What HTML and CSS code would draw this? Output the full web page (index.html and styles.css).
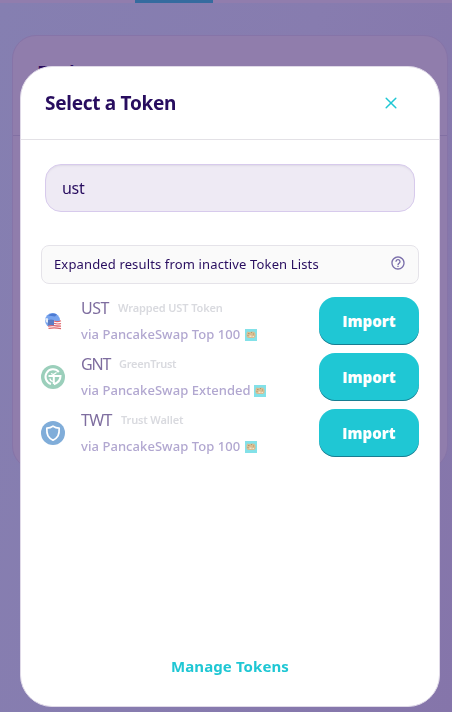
FILE: index.html
```html
<!DOCTYPE html>
<html lang="en">
<head>
<meta charset="utf-8">
<title>Select a Token</title>
<link rel="stylesheet" href="styles.css">
</head>
<body>
<div class="page">
  <div class="nav"><div class="nav-active"></div></div>
  <div class="card"><div class="card-head">Exchange</div></div>
</div>
<div class="modal">
  <header class="modal-head">
    <h1 class="title">Select a Token</h1>
    <svg class="close" viewBox="0 0 12 12"><path d="M1.2 1.2 10.8 10.8M10.8 1.2 1.2 10.8"/></svg>
  </header>
  <div class="search">ust</div>
  <div class="notice">
    <span class="notice-text">Expanded results from inactive Token Lists</span>
    <svg class="help" viewBox="0 0 24 24"><path d="M11 18h2v-2h-2v2zm1-16C6.48 2 2 6.48 2 12s4.48 10 10 10 10-4.48 10-10S17.52 2 12 2zm0 18c-4.41 0-8-3.590-8-8s3.590-8 8-8 8 3.590 8 8-3.590 8-8 8zm0-14c-2.210 0-4 1.790-4 4h2c0-1.100.9-2 2-2s2 .9 2 2c0 2-3 1.750-3 5h2c0-2.250 3-2.500 3-5 0-2.210-1.790-4-4-4z"/></svg>
  </div>
  <div class="list">
    <div class="row">
      <svg class="logo" viewBox="0 0 24 24">
        <circle cx="11.500" cy="11.500" r="7.500" fill="#78a4ee"/>
        <path fill="#4c7ad2" d="M7 6.500Q11 3 16 5.500L14 7.500z"/>
        <path fill="#e4edfb" d="m4 9.500 2.500-.5 1 2.500L6.500 14 5 13z"/>
        <path fill="#fff" d="M12.500 11.500q4 1 7.500 0V20H8l-1.500-3 6-.5z"/>
        <path fill="none" stroke="#e0646a" stroke-width="1.200" d="M13 12q3.500 1.400 7-.3M13 14.200q3.500 1.400 7 .3M7 17.200q3-1 6-.5t7 .5M7.500 19.400q6-1 12.500.2"/>
        <path fill="#5a7cc4" d="M7 11q3-1 6 0v5.500q-3-1-6 0z"/>
      </svg>
      <div class="info">
        <div class="line"><span class="symbol s-ust">UST</span><span class="name n-ust">Wrapped UST Token</span></div>
        <div class="line source"><span class="via v-top">via PancakeSwap Top 100</span><svg class="bunny" viewBox="0 0 12 12"><path fill="#83e1e8" d="M0 0h12v12H0z"/><path fill="#d8bd91" d="m1.500 4.500 1-2 2 .5 3-.5 2 .5 1 2v2.500L9 9H3L1.500 7.500z"/><path fill="#b0976f" d="M3 4h1.500v1H3zM6 3h1v1H6zM8 4.500h1v1H8zM2.500 6h1v1h-1z"/><path fill="#f4e4cc" d="M4.500 6.500h2V8h-2zM7.500 7H9v1H7.500z"/></svg></div>
      </div>
      <button class="import"><span>Import</span></button>
    </div>
    <div class="row">
      <svg class="logo" viewBox="0 0 24 24">
        <circle cx="12" cy="12" r="12" fill="#9bcfbb"/>
        <path fill="none" stroke="#fff" stroke-width="2" d="M17.800 7A7.500 7.500 0 1 0 10 19M7.500 11h12q0 6-6.700 8.200M12.800 10v9"/>
        <path fill="none" stroke="#fff" stroke-width="1.300" d="M8.800 13.500q.5 2.500 3 3M10 8.500l2.500 1 3-2"/>
      </svg>
      <div class="info">
        <div class="line"><span class="symbol s-gnt">GNT</span><span class="name n-gnt">GreenTrust</span></div>
        <div class="line source"><span class="via v-ext">via PancakeSwap Extended</span><svg class="bunny" viewBox="0 0 12 12"><path fill="#83e1e8" d="M0 0h12v12H0z"/><path fill="#d8bd91" d="m1.500 4.500 1-2 2 .5 3-.5 2 .5 1 2v2.500L9 9H3L1.500 7.500z"/><path fill="#b0976f" d="M3 4h1.500v1H3zM6 3h1v1H6zM8 4.500h1v1H8zM2.500 6h1v1h-1z"/><path fill="#f4e4cc" d="M4.500 6.500h2V8h-2zM7.500 7H9v1H7.500z"/></svg></div>
      </div>
      <button class="import"><span>Import</span></button>
    </div>
    <div class="row">
      <svg class="logo" viewBox="0 0 24 24">
        <circle cx="12" cy="12" r="12" fill="#80add9"/>
        <path fill="none" stroke="#fff" stroke-width="1.700" stroke-linejoin="round" d="M12 5.200q2.500 2 6.200 2 .2 5-1.200 7.700-1.200 2.300-5 4.300-3.800-2-5-4.300Q5.600 12.200 5.800 7.200 9.500 7.200 12 5.200z"/>
      </svg>
      <div class="info">
        <div class="line"><span class="symbol s-twt">TWT</span><span class="name n-twt">Trust Wallet</span></div>
        <div class="line source"><span class="via v-top">via PancakeSwap Top 100</span><svg class="bunny" viewBox="0 0 12 12"><path fill="#83e1e8" d="M0 0h12v12H0z"/><path fill="#d8bd91" d="m1.500 4.500 1-2 2 .5 3-.5 2 .5 1 2v2.500L9 9H3L1.500 7.500z"/><path fill="#b0976f" d="M3 4h1.500v1H3zM6 3h1v1H6zM8 4.500h1v1H8zM2.500 6h1v1h-1z"/><path fill="#f4e4cc" d="M4.500 6.500h2V8h-2zM7.500 7H9v1H7.500z"/></svg></div>
      </div>
      <button class="import"><span>Import</span></button>
    </div>
  </div>
  <footer class="manage"><span>Manage Tokens</span></footer>
</div>
</body>
</html>
```
FILE: styles.css
```css
* { box-sizing: border-box; }
body {
  margin: 0;
  height: 712px;
  overflow: hidden;
  font-family: "Noto Sans", "Open Sans", sans-serif;
  color: #280d5f;
}
.page { height: 712px; background: linear-gradient(105deg, #857fb1, #877caf 50%, #8575aa); }
.nav { height: 3px; background: #917dad; padding-left: 135px; }
.nav-active { width: 78px; height: 3px; background: #356b9f; }
.card {
  height: 435px;
  margin: 32px 4px 0 12px;
  border: 1px solid #8674a8;
  border-radius: 24px;
  background: #907dac;
}
.card-head {
  height: 100px;
  padding: 26px 24px;
  border-bottom: 1px solid #8270a3;
  font-size: 20px;
  font-weight: 600;
  line-height: 22px;
}
.modal {
  position: fixed;
  left: 20px;
  top: 66px;
  width: 420px;
  height: 641px;
  display: flex;
  flex-direction: column;
  background: #fff;
  border: 1px solid #e0dae8;
  border-radius: 32px;
  overflow: hidden;
}
.modal-head {
  height: 73px;
  flex: none;
  display: flex;
  align-items: center;
  justify-content: space-between;
  padding: 0 42px 0 24px;
  border-bottom: 1px solid #e3e1e6;
}
.title { margin: 0; font-size: 19px; font-weight: 700; line-height: 30px; letter-spacing: -0.28px; white-space: nowrap; }
.close { width: 12px; height: 12px; fill: none; stroke: #1fc7d4; stroke-width: 1.5; stroke-linecap: round; }
.search {
  height: 48px;
  flex: none;
  margin: 24px 24px 0;
  padding: 0 16px;
  border: 1px solid #d7caec;
  border-radius: 16px;
  background: #eeeaf4;
  box-shadow: inset 0 2px 2px -1px rgba(74, 74, 104, .1);
  font-size: 16px;
  letter-spacing: -0.3px;
  line-height: 47px;
}
.notice {
  height: 39px;
  flex: none;
  margin: 33px 20px 0;
  padding: 0 12px;
  display: flex;
  align-items: center;
  justify-content: space-between;
  border: 1px solid #e5e3e9;
  border-radius: 8px;
  background: #fafafa;
}
.notice-text { font-size: 13px; letter-spacing: 0.14px; margin-top: -1px; white-space: nowrap; }
.help { width: 16px; height: 16px; fill: #7a6eaa; margin-top: -3px; }
.list { margin: 9px 20px 0; }
.row { height: 56px; display: flex; align-items: center; }
.logo { width: 24px; height: 24px; flex: none; }
.info { flex: 1; margin-left: 16px; }
.line { height: 26px; display: flex; align-items: center; white-space: nowrap; }
.symbol { font-size: 16px; color: #7e6d9f; }
.s-ust { width: 28px; letter-spacing: -0.5px; }
.s-gnt { width: 29px; letter-spacing: -1.1px; }
.s-twt { width: 31px; letter-spacing: -0.6px; }
.name { margin-left: 9px; font-size: 11px; font-weight: 600; color: #d9dadf; margin-top: -1px; }
.n-ust { letter-spacing: -0.13px; }
.n-gnt { letter-spacing: -0.25px; }
.n-twt { letter-spacing: -0.15px; }
.source { font-size: 13px; color: #b1a7d0; font-weight: 500; }
.v-top { width: 160px; letter-spacing: 0.06px; }
.v-ext { width: 169px; letter-spacing: 0.06px; }
.bunny { width: 12px; height: 12px; margin: 1px 0 0 4px; }
.import {
  width: 100px;
  height: 48px;
  flex: none;
  padding: 0;
  border: 0;
  border-radius: 16px;
  background: #1fc7d4;
  box-shadow: inset 0 -1px 0 rgba(14, 14, 44, .4);
  color: #fff;
  font: 800 15px/49px "Open Sans", sans-serif;
}
.manage {
  margin-top: auto;
  padding-bottom: 28px;
  text-align: center;
  font-size: 15px;
  letter-spacing: 0.1px;
  line-height: 24px;
  font-weight: 700;
  color: #1fc7d4;
}
```
